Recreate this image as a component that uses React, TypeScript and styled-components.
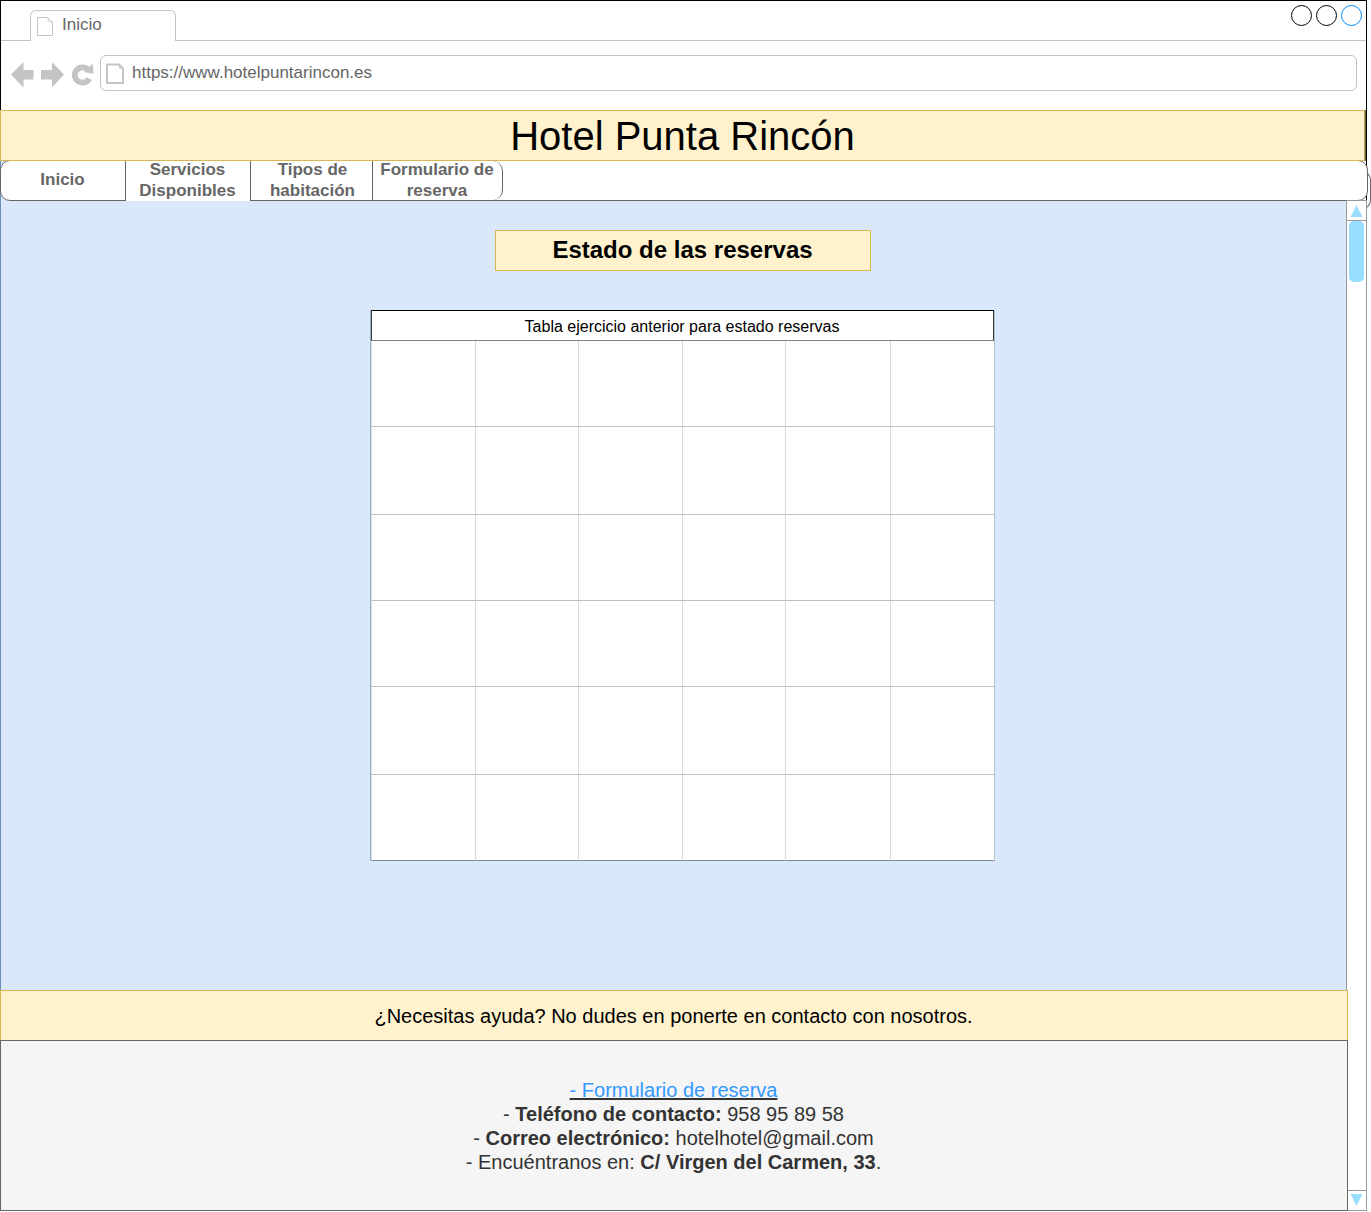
import React from 'react';
import styled, { createGlobalStyle } from 'styled-components';

const GlobalStyle = createGlobalStyle`
  *, *::before, *::after { box-sizing: border-box; }
  body {
    margin: 0;
    background: #fff;
    font-family: "Liberation Sans", Arial, Helvetica, sans-serif;
    overflow: hidden;
  }
`;

const Page = styled.div`
  width: 1371px;
  height: 1212px;
`;

const BrowserWindow = styled.div`
  position: relative;
  display: flex;
  flex-direction: column;
  width: 1367px;
  height: 1211px;
`;

const Chrome = styled.header`
  height: 110px;
  border: 1px solid #000;
  border-bottom: 0;
  background: #fff;
`;

const TabStrip = styled.div`
  display: flex;
  align-items: flex-end;
  justify-content: space-between;
  height: 40px;
  padding-left: 29px;
  border-bottom: 1px solid #c4c4c4;
`;

const BrowserTab = styled.div`
  display: flex;
  align-items: flex-start;
  gap: 9px;
  width: 146px;
  height: 31px;
  margin-bottom: -1px;
  padding: 6px 0 0 6px;
  border: 1px solid #c4c4c4;
  border-bottom: 0;
  border-radius: 6px 6px 0 0;
  background: #fff;
  color: #666;
  font-size: 17px;
  line-height: 20px;

  span { margin-top: -2px; }
`;

const WindowButtons = styled.div`
  display: flex;
  align-self: flex-start;
  gap: 4px;
  padding: 4px 4px 0 0;
`;

const WindowButton = styled.span<{ $color: string }>`
  width: 21px;
  height: 21px;
  border: 1px solid ${(p) => p.$color};
  border-radius: 50%;
`;

const Toolbar = styled.div`
  display: flex;
  align-items: flex-start;
  padding: 14px 9px 0 9px;
`;

const NavIcons = styled.svg`
  flex: none;
  width: 90px;
  height: 36px;
`;

const AddressBar = styled.div`
  display: flex;
  flex: 1;
  align-items: center;
  gap: 8px;
  height: 36px;
  padding-left: 5px;
  border: 1px solid #c4c4c4;
  border-radius: 6px;
  color: #666;
  font-size: 17px;
  line-height: 20px;
`;

const Banner = styled.div<{ $width: number; $size: number }>`
  position: relative;
  z-index: 1;
  display: flex;
  flex: none;
  align-items: center;
  justify-content: center;
  width: ${(p) => p.$width}px;
  height: 51px;
  padding-right: 1px;
  border: 1px solid #d6b656;
  background: #fff2cc;
  color: #000;
  font-size: ${(p) => p.$size}px;
  line-height: 1.2;
`;

const MainBanner = styled(Banner)`
  padding-right: 0;
  border-right-color: #b39c58;
  box-shadow: 1px 0 0 #6b5f3a, 2px 0 0 #000;
`;

const MenuShadow = styled.div`
  position: absolute;
  top: 170px;
  right: -4px;
  width: 14px;
  height: 40px;
  border: 1px solid #666;
  border-left: 0;
  border-radius: 0 10px 10px 0;
  background: #fff;
`;

const MenuBack = styled.div`
  position: relative;
  flex: none;
  height: 41px;
  margin-top: -1px;
  background: linear-gradient(90deg, #6c8ebf 1px, #dae8fc 1px, #dae8fc 12px, transparent 12px, transparent 1366px, #000 1366px);
`;

const Menu = styled.nav`
  display: flex;
  width: 1368px;
  height: 41px;
  border: 1px solid #666;
  border-radius: 10px;
  background: #fff;
`;

const MenuItem = styled.a<{ $width: number; $selected?: boolean; $last?: boolean; $inset?: number }>`
  display: flex;
  align-items: center;
  justify-content: center;
  width: ${(p) => p.$width}px;
  height: ${(p) => (p.$selected ? 40 : 39)}px;
  padding: 0 ${(p) => p.$inset ?? 1}px ${(p) => (p.$selected ? 3 : 2)}px 0;
  padding-left: ${(p) => (p.$inset === 0 ? 2 : 0)}px;
  border-right: 1px solid #666;
  border-radius: ${(p) => (p.$last ? '0 10px 10px 0' : '0')};
  background: ${(p) => (p.$selected ? '#fff' : 'transparent')};
  color: #666;
  font-size: 17px;
  font-weight: 700;
  line-height: 21px;
  text-align: center;
  white-space: nowrap;
`;

const Body = styled.div`
  display: flex;
  flex: 1;
  min-height: 0;
`;

const Content = styled.div`
  display: flex;
  flex-direction: column;
  width: 1346px;
`;

const Main = styled.main`
  display: flex;
  flex: 1;
  flex-direction: column;
  align-items: center;
  padding: 29px 0 0 18px;
  border-left: 1px solid #6c8ebf;
  background: #dae8fc;
`;

const Heading = styled.h1`
  display: flex;
  align-items: center;
  justify-content: center;
  width: 376px;
  height: 41px;
  margin: 0 0 39px;
  padding-bottom: 2px;
  border: 1px solid #d6b656;
  background: #fff2cc;
  color: #000;
  font-size: 24px;
  line-height: 29px;
`;

const Board = styled.section`
  width: 625px;
  border-left: 1px solid #a1aec4;
  border-right: 1px solid #b9c1ce;
  background: #fff;
`;

const BoardTitle = styled.div`
  display: flex;
  align-items: center;
  justify-content: center;
  height: 31px;
  padding: 2px 1px 0 0;
  border: 1px solid #000;
  border-bottom-color: #808080;
  border-left-color: #333a48;
  border-right-color: #333;
  color: #000;
  font-size: 16px;
  line-height: 19px;
`;

const Grid = styled.div`
  display: grid;
  grid-template-columns: 105px 103px 104px 103px 105px 103px;
  grid-template-rows: 86px 88px 86px 86px 88px 86px;
`;

const Cell = styled.div<{ $lastCol: boolean; $lastRow: boolean; $firstCol: boolean }>`
  border-bottom: 1px solid ${(p) => (p.$lastRow ? '#7f8998' : '#c0c0c0')};
  border-right: ${(p) => (p.$lastCol ? '0' : '1px solid #d9d9d9')};
  border-left: ${(p) => (p.$firstCol ? '1px solid #d8dde6' : '0')};
`;

const Contact = styled.footer`
  display: flex;
  flex: none;
  flex-direction: column;
  align-items: center;
  width: 1348px;
  height: 171px;
  margin-top: -1px;
  padding: 37px 1px 0 0;
  position: relative;
  z-index: 2;
  border: 1px solid #666;
  background: #f5f5f5;
  color: #333;
  font-size: 20px;
  line-height: 24px;
`;

const FormLink = styled.a`
  color: #3399ff;
  text-decoration: underline #333 2px;
  text-decoration-skip-ink: none;
  text-underline-offset: 1px;
`;

const Scrollbar = styled.div`
  display: flex;
  flex-direction: column;
  width: 21px;
  margin-top: -1px;
  border: 1px solid #999;
  background: #fff;
  position: relative;
`;

const ScrollButton = styled.div<{ $down?: boolean }>`
  display: flex;
  justify-content: center;
  height: 20px;
  padding-top: ${(p) => (p.$down ? 3 : 4)}px;
  border-bottom: ${(p) => (p.$down ? '0' : '1px solid #999')};
  border-top: ${(p) => (p.$down ? '1px solid #999' : '0')};
`;

const Track = styled.div`
  flex: 1;
  padding: 0 2px;
`;

const Thumb = styled.div`
  width: 15px;
  height: 61px;
  border-radius: 5px;
  background: #99ddff;
`;

const menuItems = [
  { lines: ['Inicio'], width: 125 },
  { lines: ['Servicios', 'Disponibles'], width: 125, selected: true },
  { lines: ['Tipos de', 'habitación'], width: 122, inset: 0 },
  { lines: ['Formulario de', 'reserva'], width: 130, last: true },
];

const cells = Array.from({ length: 36 }, (_, i) => i);

export default function App() {
  return (
    <Page>
      <GlobalStyle />
      <BrowserWindow>
        <MenuShadow />
        <Chrome>
          <TabStrip>
            <BrowserTab>
              <svg width="16" height="19" viewBox="0 0 16 19" fill="none" stroke="#c4c4c4">
                <path d="M.5.5h10l5 5v13H.5z" />
                <path d="M10.5.5L11.5 4.5l4 1" strokeWidth=".7" />
              </svg>
              <span>Inicio</span>
            </BrowserTab>
            <WindowButtons>
              <WindowButton $color="#000" />
              <WindowButton $color="#000" />
              <WindowButton $color="#008cff" />
            </WindowButtons>
          </TabStrip>
          <Toolbar>
            <NavIcons viewBox="10 55 90 36" fill="#c4c4c4">
              <path d="M11 74.5L23.5 62v8H33.5v9.500H23.500v8z" />
              <path d="M64 74.500L52 62v8H41v9.500h11v8z" />
              <path d="M88 69.600A7.700 7.700 0 1 0 89.300 78.600" fill="none" stroke="#c4c4c4" strokeWidth="5.800" />
              <path d="M92.600 63.500L93.600 73.800L84 72z" />
            </NavIcons>
            <AddressBar>
              <svg width="18" height="21" viewBox="0 0 18 21" fill="none" stroke="#c4c4c4" strokeWidth="2">
                <path d="M1 1.500h12l4 4V20H1z" />
                <path d="M13 1.500l.5 3.500 3.500.5" strokeWidth="1" />
              </svg>
              <span>https://www.hotelpuntarincon.es</span>
            </AddressBar>
          </Toolbar>
        </Chrome>
        <MainBanner $width={1365} $size={40}>Hotel Punta Rincón</MainBanner>
        <MenuBack>
          <Menu>
            {menuItems.map((item) => (
              <MenuItem key={item.lines[0]} $width={item.width} $selected={item.selected} $last={item.last} $inset={item.inset}>
                <span>
                  {item.lines.map((line, i) => (
                    <React.Fragment key={line}>
                      {i > 0 && <br />}
                      {line}
                    </React.Fragment>
                  ))}
                </span>
              </MenuItem>
            ))}
          </Menu>
        </MenuBack>
        <Body>
          <Content>
            <Main>
              <Heading>Estado de las reservas</Heading>
              <Board>
                <BoardTitle>Tabla ejercicio anterior para estado reservas</BoardTitle>
                <Grid>
                  {cells.map((i) => (
                    <Cell key={i} $firstCol={i % 6 === 0} $lastCol={i % 6 === 5} $lastRow={i >= 30} />
                  ))}
                </Grid>
              </Board>
            </Main>
            <Banner $width={1348} $size={20}>¿Necesitas ayuda? No dudes en ponerte en contacto con nosotros.</Banner>
            <Contact>
              <FormLink>- Formulario de reserva</FormLink>
              <div>- <b>Teléfono de contacto:</b> 958 95 89 58</div>
              <div>- <b>Correo electrónico:</b> hotelhotel@gmail.com</div>
              <div>- Encuéntranos en: <b>C/ Virgen del Carmen, 33</b>.</div>
            </Contact>
          </Content>
          <Scrollbar>
            <ScrollButton>
              <svg width="13" height="12" viewBox="0 0 13 12" fill="#99ddff"><path d="M6.500 0l6 12h-12z" /></svg>
            </ScrollButton>
            <Track><Thumb /></Track>
            <ScrollButton $down>
              <svg width="13" height="12" viewBox="0 0 13 12" fill="#99ddff"><path d="M.5 0h12l-6 12z" /></svg>
            </ScrollButton>
          </Scrollbar>
        </Body>
      </BrowserWindow>
    </Page>
  );
}
